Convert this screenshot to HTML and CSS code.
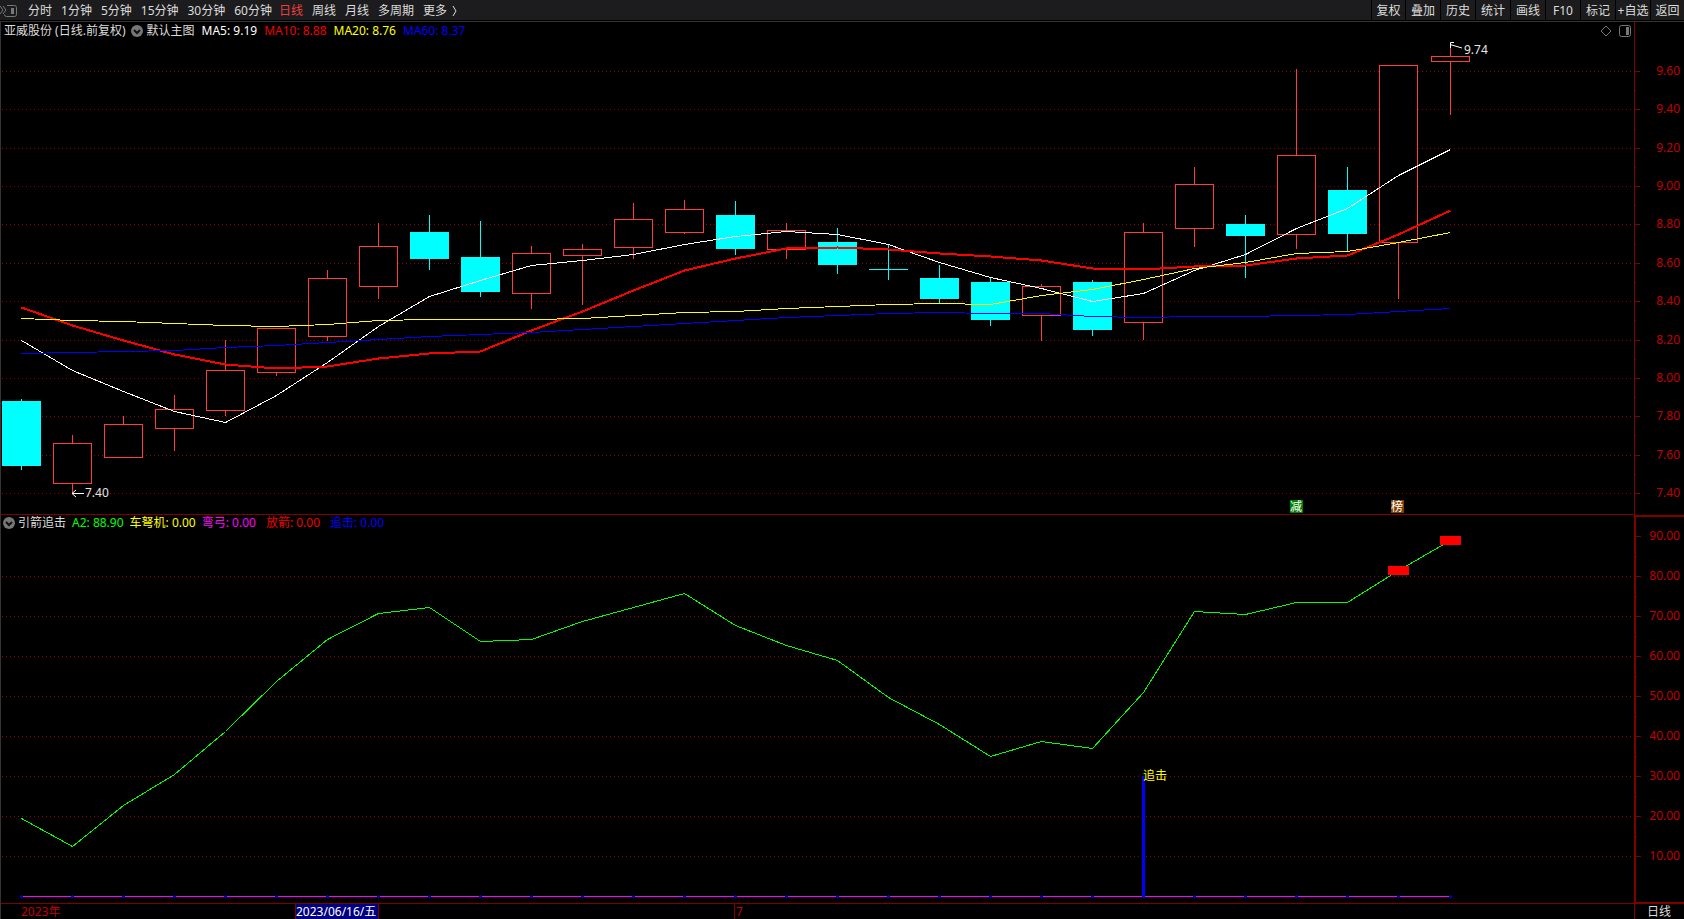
FILE: index.html
```
<!DOCTYPE html>
<html lang="zh-CN">
<head>
    <meta charset="utf-8">
    <title>亚威股份 日线</title>
    <link rel="stylesheet" href="styles.css">
</head>
<body>
    <header class="toolbar">
        <button class="panel-toggle" aria-label="展开侧栏">
            <svg width="18" height="14" viewBox="0 0 18 14">
                <path d="M0 2l3 4-3 4M3 2l3 4-3 4" />
                <path d="M7 1.500h7.500q2 0 2 2v7q0 2-2 2h-8q-2 0-2-2" />
                <rect x="11" y="4" width="3" height="6" />
            </svg>
        </button>
        <nav class="periods">
            <button>分时</button>
            <button>1分钟</button>
            <button>5分钟</button>
            <button>15分钟</button>
            <button>30分钟</button>
            <button>60分钟</button>
            <button class="active">日线</button>
            <button>周线</button>
            <button>月线</button>
            <button>多周期</button>
            <button class="more">更多
                <svg width="5" height="12" viewBox="0 0 5 12"><path d="M1 1l3 5-3 5" /></svg>
            </button>
        </nav>
        <div class="tools">
            <button>复权</button>
            <button>叠加</button>
            <button>历史</button>
            <button>统计</button>
            <button>画线</button>
            <button>F10</button>
            <button>标记</button>
            <button>+自选</button>
            <button>返回</button>
        </div>
    </header>

    <main class="charts">
        <section class="panel">
            <svg class="plot" id="pricePlot"></svg>
            <div class="legend">
                <span>亚威股份 (日线.前复权)</span>
                <button class="drop" aria-label="主图指标">
                    <svg width="12" height="12" viewBox="0 0 12 12"><circle cx="6" cy="6" r="6" /><path d="M3 5l3 3 3-3" /></svg>
                </button>
                <span class="name">默认主图</span>
                <span class="ma5">MA5: 9.19</span>
                <span class="ma10">MA10: 8.88</span>
                <span class="ma20">MA20: 8.76</span>
                <span class="ma60">MA60: 8.37</span>
                <div class="corner">
                    <button aria-label="标记点">
                        <svg width="12" height="12" viewBox="0 0 12 12"><path d="M6 1l5 5-5 5-5-5z" /></svg>
                    </button>
                    <button aria-label="右侧栏">
                        <svg width="12" height="12" viewBox="0 0 12 12"><rect x="0.500" y="0.500" width="11" height="11" rx="2" /><rect class="fill" x="7" y="2" width="3" height="8" /></svg>
                    </button>
                </div>
            </div>
        </section>
        <svg class="axis" id="priceAxis"></svg>

        <section class="panel">
            <svg class="plot" id="signalPlot"></svg>
            <div class="legend signal-legend">
                <button class="drop" aria-label="副图指标">
                    <svg width="12" height="12" viewBox="0 0 12 12"><circle cx="6" cy="6" r="6" /><path d="M3 5l3 3 3-3" /></svg>
                </button>
                <span class="name">引箭追击</span>
                <span class="a2">A2: 88.90</span>
                <span class="ma20">车弩机: 0.00</span>
                <span class="bow">弯弓: 0.00</span>
                <span class="shoot">放箭: 0.00</span>
                <span class="chase">追击: 0.00</span>
            </div>
        </section>
        <svg class="axis signal-axis" id="signalAxis"></svg>

        <svg class="dates" id="dates"></svg>
        <div class="period">日线</div>
    </main>

    <script src="chart.js"></script>
</body>
</html>
```
FILE: styles.css
```
* {
    box-sizing: border-box;
}
body {
    margin: 0;
    height: 100vh;
    display: flex;
    flex-direction: column;
    overflow: hidden;
    background: #000;
    color: #dcdcdc;
    font-family: "Noto Sans", "Noto Sans CJK SC", sans-serif;
    font-size: 12px;
    line-height: 16px;
}
button {
    margin: 0;
    padding: 0;
    border: none;
    background: none;
    color: inherit;
    font: inherit;
    white-space: nowrap;
    cursor: pointer;
}
svg {
    display: block;
}

/* toolbar */
.toolbar {
    display: flex;
    height: 20px;
    background: #1c1c1e;
}
.toolbar button {
    padding-top: 2px;
}
.panel-toggle {
    width: 28px;
}
.panel-toggle path {
    fill: none;
    stroke: #777;
}
.panel-toggle rect {
    fill: #777;
}
.periods {
    display: flex;
    gap: 9px;
}
.periods .active {
    margin-left: -2px;
    color: #f03c3c;
}
.more {
    display: flex;
    align-items: center;
    gap: 5px;
}
.more path {
    fill: none;
    stroke: #dcdcdc;
}
.tools {
    display: flex;
    margin-left: auto;
}
.tools button {
    width: 35px;
    border-left: 1px solid #000;
}
.tools button:first-child,
.tools button:last-child {
    width: 34px;
}

/* charts */
.charts {
    flex: 1;
    display: grid;
    grid-template-columns: minmax(0, 1fr) 50px;
    grid-template-rows: minmax(0, 493fr) minmax(0, 389fr) 15px;
    margin-top: 1px;
    border-top: 1px solid #333;
    border-left: 1px solid #333;
}
.panel {
    display: grid;
    min-height: 0;
    border-bottom: 1px solid #800000;
}
.plot,
.legend {
    grid-area: 1 / 1;
}
.plot,
.axis,
.dates {
    width: 100%;
    height: 100%;
    min-height: 0;
    overflow: hidden;
}
.dates {
    overflow: visible;
}
.axis {
    border-left: 1px solid #800000;
}
.signal-axis {
    border: solid #800000;
    border-width: 2px 0 2px 2px;
}
.legend {
    display: flex;
    align-items: center;
    align-self: start;
    gap: 7px;
    height: 18px;
    padding-left: 3px;
    white-space: nowrap;
}
.legend .name {
    margin-left: -3px;
}
.signal-legend {
    gap: 6px;
    height: 16px;
    padding-left: 2px;
}
.drop {
    margin-left: -2px;
}
.signal-legend .drop {
    margin-left: 0;
}
.drop circle {
    fill: #777;
}
.drop path {
    fill: none;
    stroke: #111;
    stroke-width: 2;
}
.ma5 {
    color: #fff;
}
.ma10 {
    color: #f00000;
}
.ma20 {
    color: #ff0;
}
.ma60 {
    color: #0000ff;
}
.a2 {
    color: #0f0;
}
.bow {
    color: #f0f;
}
.shoot {
    color: #f00000;
    margin-left: 4px;
}
.chase {
    color: #00f;
    margin-left: 4px;
}
.corner {
    display: flex;
    gap: 7px;
    margin-left: auto;
    padding-right: 3px;
}
.corner svg {
    fill: none;
    stroke: #777;
}
.corner .fill {
    fill: #777;
    stroke: none;
}
.period {
    padding-left: 12px;
    border-left: 1px solid #800000;
    line-height: 15px;
}

/* drawing */
.grid-line {
    stroke: #900000;
    stroke-dasharray: 1 3;
}
.tick,
.date-line {
    stroke: #800000;
}
.axis text,
.dates text {
    fill: #c00000;
}
.up {
    fill: #000;
    stroke: #ff3c3c;
}
.down {
    fill: #0ff;
    stroke: none;
}
.wick-up {
    stroke: #ff3c3c;
}
.wick-down {
    stroke: #0ff;
}
.line {
    fill: none;
}
.line-ma5 {
    stroke: #fff;
}
.line-ma10 {
    stroke: #f00;
    stroke-width: 2;
}
.line-ma20 {
    stroke: #ff0;
}
.line-ma60 {
    stroke: #00f;
}
.line-a2 {
    stroke: #0f0;
}
.line-zero {
    stroke: #f0f;
}
.zero-dot {
    stroke: #00f;
}
.chase-bar {
    fill: #00f;
}
.hot {
    fill: #f00;
}
.arrow {
    fill: none;
    stroke: #fff;
}
.mark {
    fill: #e6e6e6;
}
.chase-text {
    fill: #ff0;
}
.badge-cut {
    fill: #008000;
}
.badge-list {
    fill: #804000;
}
.badge-text {
    fill: #fff;
    font-size: 12px;
}
.date-box {
    fill: #000080;
    stroke: #800000;
}
.dates .date-text {
    fill: #fff;
}
```
FILE: chart.js
```
// open, high, low, close
const candles = [
    [7.88, 7.89, 7.52, 7.54], [7.45, 7.70, 7.40, 7.66], [7.59, 7.80, 7.59, 7.76],
    [7.74, 7.91, 7.62, 7.84], [7.83, 8.20, 7.80, 8.04], [8.03, 8.26, 8.01, 8.26],
    [8.22, 8.56, 8.19, 8.52], [8.48, 8.81, 8.41, 8.69], [8.76, 8.85, 8.56, 8.62],
    [8.63, 8.82, 8.42, 8.45], [8.44, 8.69, 8.36, 8.65], [8.64, 8.70, 8.38, 8.67],
    [8.68, 8.91, 8.62, 8.83], [8.76, 8.93, 8.75, 8.88], [8.85, 8.92, 8.64, 8.67],
    [8.67, 8.81, 8.62, 8.77], [8.71, 8.78, 8.54, 8.59], [8.57, 8.70, 8.51, 8.57],
    [8.52, 8.59, 8.39, 8.41], [8.50, 8.52, 8.27, 8.30], [8.33, 8.49, 8.19, 8.48],
    [8.50, 8.51, 8.22, 8.25], [8.29, 8.81, 8.20, 8.76], [8.78, 9.10, 8.68, 9.01],
    [8.80, 8.85, 8.52, 8.74], [8.75, 9.61, 8.67, 9.16], [8.98, 9.10, 8.66, 8.75],
    [8.71, 9.63, 8.41, 9.63], [9.65, 9.74, 9.37, 9.68]
];
const ma5 = [8.197, 8.04, 7.934, 7.828, 7.768, 7.912, 8.084, 8.27, 8.426, 8.508,
    8.586, 8.616, 8.644, 8.696, 8.74, 8.764, 8.748, 8.696, 8.602, 8.528,
    8.47, 8.402, 8.44, 8.56, 8.648, 8.784, 8.884, 9.058, 9.192];
const ma10 = [8.368, 8.275, 8.198, 8.126, 8.073, 8.054, 8.063, 8.105, 8.132, 8.138,
    8.249, 8.35, 8.457, 8.561, 8.624, 8.675, 8.682, 8.67, 8.649, 8.634,
    8.617, 8.575, 8.568, 8.581, 8.588, 8.627, 8.643, 8.749, 8.876];
const ma20 = [8.313, 8.303, 8.298, 8.287, 8.277, 8.271, 8.282, 8.301, 8.308, 8.308,
    8.308, 8.313, 8.329, 8.344, 8.35, 8.365, 8.376, 8.384, 8.391, 8.387,
    8.433, 8.463, 8.513, 8.571, 8.606, 8.651, 8.663, 8.71, 8.763];
const ma60 = [8.131, 8.136, 8.141, 8.148, 8.16, 8.171, 8.186, 8.204, 8.216, 8.228,
    8.238, 8.257, 8.273, 8.287, 8.303, 8.318, 8.329, 8.336, 8.342, 8.339,
    8.337, 8.324, 8.318, 8.324, 8.324, 8.329, 8.334, 8.348, 8.365];
const a2 = [19.5, 12.6, 22.8, 30.5, 41.3, 53.8, 64.2, 70.7, 72.2, 63.8,
    64.3, 68.7, 72.2, 75.8, 67.9, 62.8, 59.1, 49.7, 43, 35,
    38.8, 37, 51.1, 71.3, 70.5, 73.5, 73.5, 81.4, 89];

const SLOTS = 32;
const PRICE = { min: 7.293, max: 9.858 };
const SIGNAL = { min: -1.6, max: 95.4 };

function el(parent, tag, attrs, text) {
    const node = document.createElementNS('http://www.w3.org/2000/svg', tag);
    for (const key in attrs) node.setAttribute(key, attrs[key]);
    if (text) node.textContent = text;
    parent.appendChild(node);
    return node;
}

function line(svg, cls, x1, y1, x2, y2) {
    el(svg, 'line', { class: cls, x1, y1, x2, y2, 'shape-rendering': 'crispEdges' });
}

function box(svg, cls, x, y, width, height) {
    el(svg, 'rect', { class: cls, x, y, width, height, 'shape-rendering': 'crispEdges' });
}

// pixel row of a value
function scaleY(range, height) {
    return v => Math.floor((range.max - v) / (range.max - range.min) * height);
}

// pixel column of a candle's centre
function scaleX(width) {
    const step = width / SLOTS;
    return i => Math.floor(step * (i + 0.3947));
}

function series(svg, name, values, x, y) {
    el(svg, 'polyline', {
        class: 'line line-' + name,
        points: values.map((v, i) => (x(i) + 0.5) + ',' + (y(v) + 0.5)).join(' '),
        'shape-rendering': 'crispEdges'
    });
}

function reset(id) {
    const svg = document.getElementById(id);
    svg.innerHTML = '';
    return svg;
}

function drawPrice() {
    const svg = reset('pricePlot');
    const w = svg.clientWidth, h = svg.clientHeight;
    const x = scaleX(w), y = scaleY(PRICE, h);
    const half = Math.floor(w / SLOTS * 0.38);

    for (let p = 74; p <= 96; p += 2) {
        line(svg, 'grid-line', 1, y(p / 10) + 0.5, w, y(p / 10) + 0.5);
    }

    candles.forEach(([open, high, low, close], i) => {
        const cx = x(i);
        const up = close > open;
        line(svg, up ? 'wick-up' : 'wick-down', cx + 0.5, y(high), cx + 0.5, y(low));
        if (up) {
            box(svg, 'up', cx - half + 0.5, y(close) + 0.5, half * 2, y(open) - y(close));
        } else {
            box(svg, 'down', cx - half, y(open), half * 2 + 1, Math.max(1, y(close) - y(open)));
        }
    });

    series(svg, 'ma5', ma5, x, y);
    series(svg, 'ma10', ma10, x, y);
    series(svg, 'ma20', ma20, x, y);
    series(svg, 'ma60', ma60, x, y);

    const lx = x(1), ly = y(7.4);
    el(svg, 'path', { class: 'arrow', d: `M${lx + 12} ${ly + 0.5}H${lx}M${lx + 4} ${ly - 3}L${lx} ${ly + 0.5}L${lx + 4} ${ly + 4}` });
    el(svg, 'text', { class: 'mark', x: lx + 13, y: ly + 4 }, '7.40');

    const hx = x(28), hy = y(9.74);
    el(svg, 'path', { class: 'arrow', d: `M${hx + 12} ${hy + 4}L${hx} ${hy + 0.5}M${hx + 4} ${hy - 1.5}H${hx + 0.5}V${hy + 4}` });
    el(svg, 'text', { class: 'mark', x: hx + 14, y: hy + 10 }, '9.74');

    badge(svg, 'badge-cut', x(25) - 6, h - 14, '减');
    badge(svg, 'badge-list', x(27) - 7, h - 14, '榜');
}

function badge(svg, cls, x, y, text) {
    box(svg, cls, x, y, 13, 13);
    el(svg, 'text', { class: 'badge-text', x, y: y + 11 }, text);
}

function drawSignal() {
    const svg = reset('signalPlot');
    const w = svg.clientWidth, h = svg.clientHeight;
    const x = scaleX(w), y = scaleY(SIGNAL, h);

    for (let v = 10; v <= 80; v += 10) {
        line(svg, 'grid-line', 1, y(v) + 0.5, w, y(v) + 0.5);
    }
    series(svg, 'a2', a2, x, y);
    series(svg, 'zero', a2.map(() => 0), x, y);
    a2.forEach((v, i) => {
        line(svg, 'zero-dot', x(i) - 1, y(0) + 0.5, x(i) + 2, y(0) + 0.5);
        line(svg, 'zero-dot', x(i) + 0.5, y(0) - 1, x(i) + 0.5, y(0) + 2);
    });

    box(svg, 'chase-bar', x(22) - 1, y(30), 3, y(0) - y(30) + 1);
    el(svg, 'text', { class: 'chase-text', x: x(22), y: y(30) + 4 }, '追击');
    [27, 28].forEach(i => box(svg, 'hot', x(i) - 10, y(a2[i]) - 4, 21, 9));
}

function drawAxis(id, range, top, from, to, step, offset) {
    const svg = reset(id);
    const w = svg.clientWidth;
    const y = scaleY(range, document.getElementById(top).clientHeight);
    for (let n = from; n <= to; n++) {
        const row = y(n * step) - offset;
        const major = n % 2 === 0;
        line(svg, 'tick', 0, row + 0.5, major ? 5 : 1, row + 0.5);
        if (major) {
            el(svg, 'text', { x: w - 4, y: row + 4, 'text-anchor': 'end' }, (n * step).toFixed(2));
        }
    }
}

function drawDates() {
    const svg = reset('dates');
    const x = scaleX(svg.clientWidth);
    el(svg, 'text', { x: x(0), y: 12 }, '2023年');

    const label = el(svg, 'text', { class: 'date-text', y: 12 }, '2023/06/16/五');
    const width = Math.ceil(label.getComputedTextLength()) + 2;
    const left = x(7) - width;
    label.setAttribute('x', left + 1);
    box(svg, 'date-box', left + 0.5, -0.5, width, 17);
    svg.appendChild(label);

    line(svg, 'date-line', x(14) - 0.5, 0, x(14) - 0.5, 15);
    el(svg, 'text', { x: x(14) + 1, y: 12 }, '7');
}

function draw() {
    drawPrice();
    drawSignal();
    drawAxis('priceAxis', PRICE, 'pricePlot', 74, 96, 0.1, 0);
    drawAxis('signalAxis', SIGNAL, 'signalPlot', 2, 18, 5, 2);
    drawDates();
}

draw();
window.addEventListener('resize', draw);
```
